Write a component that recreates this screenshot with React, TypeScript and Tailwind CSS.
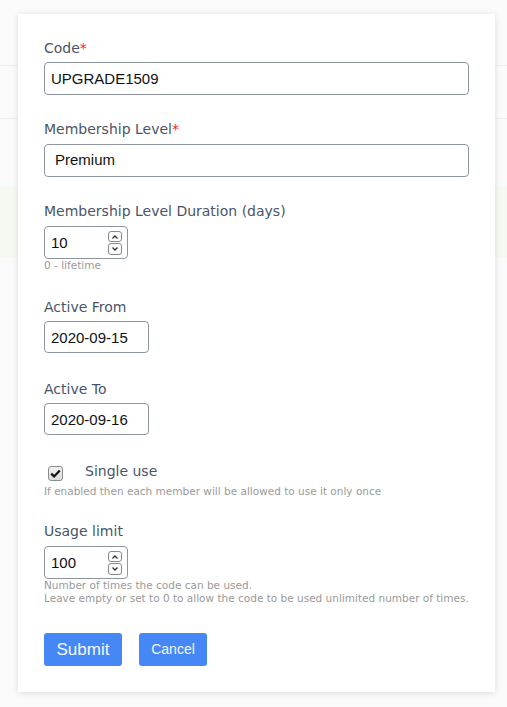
import React from "react";

const labelCls = "block text-[14px] leading-[20px] text-[#4a5568]";
const inputCls =
  "block w-full rounded-[4px] border border-[#8f95a0] bg-white px-[6px] text-[15px] text-[#111] outline-none";
const helpCls = "text-[10.5px] leading-[12px] text-[#9a9a9a]";

function Label({ children, required }: { children: React.ReactNode; required?: boolean }) {
  return (
    <label className={labelCls} style={{ fontFamily: "'DejaVu Sans', sans-serif" }}>
      {children}
      {required && <span className="text-[#ff1a1a]">*</span>}
    </label>
  );
}

function Chevron({ up }: { up?: boolean }) {
  return (
    <svg width="8" height="6" viewBox="0 0 8 6" className="block">
      <path
        d={up ? "M1.5 4.5 L4 2 L6.5 4.5" : "M1.5 1.5 L4 4 L6.5 1.5"}
        fill="none"
        stroke="#333"
        strokeWidth="1.3"
      />
    </svg>
  );
}

function NumberField({ value }: { value: string }) {
  return (
    <div className="relative w-[84px]">
      <input readOnly value={value} className={`${inputCls} h-[33px]`} style={{ fontFamily: "'Liberation Sans', Arial, sans-serif" }} />
      <div className="absolute right-[6px] top-[5px] flex flex-col gap-[1px]">
        <span className="flex h-[11px] w-[14px] items-center justify-center rounded-[3px] border border-[#8a8a8a] bg-[#fbfbfb]">
          <Chevron up />
        </span>
        <span className="flex h-[12px] w-[14px] items-center justify-center rounded-[3px] border border-[#8a8a8a] bg-[#fbfbfb]">
          <Chevron />
        </span>
      </div>
    </div>
  );
}

export default function App() {
  const sans = { fontFamily: "'Liberation Sans', Arial, sans-serif" };
  const deja = { fontFamily: "'DejaVu Sans', sans-serif" };

  return (
    <div className="relative h-[707px] w-full overflow-hidden bg-[#fafafa]">
      {/* page behind the dialog */}
      <div className="h-[65px]" />
      <div className="h-[1px] bg-[#efefef]" />
      <div className="h-[52px]" />
      <div className="h-[1px] bg-[#efefef]" />
      <div className="h-[68px]" />
      <div className="h-[70px] bg-[#f4faf1]" />

      {/* dialog */}
      <div className="absolute left-[18px] top-[14px] w-[477px] bg-white px-[26px] pb-[26px] pt-[24px] shadow-[0_1px_6px_rgba(0,0,0,0.12)]">
        <Label required>Code</Label>
        <input readOnly value="UPGRADE1509" className={`${inputCls} mt-[4px] h-[33px]`} style={sans} />

        <div className="mt-[24px]">
          <Label required>Membership Level</Label>
          <div className={`${inputCls} mt-[5px] flex h-[33px] items-center px-[10px]`} style={sans}>
            Premium
          </div>
        </div>

        <div className="mt-[24px]">
          <Label>Membership Level Duration (days)</Label>
          <div className="mt-[5px]">
            <NumberField value="10" />
          </div>
          <p className={helpCls} style={deja}>0 - lifetime</p>
        </div>

        <div className="mt-[26px]">
          <Label>Active From</Label>
          <div className="mt-[4px] w-[105px]">
            <input readOnly value="2020-09-15" className={`${inputCls} h-[32px]`} style={sans} />
          </div>
        </div>

        <div className="mt-[26px]">
          <Label>Active To</Label>
          <div className="mt-[4px] w-[105px]">
            <input readOnly value="2020-09-16" className={`${inputCls} h-[32px]`} style={sans} />
          </div>
        </div>

        <div className="mt-[26px]">
          <div className="flex h-[20px] items-start">
            <span className="ml-[4px] mt-[5px] flex h-[15px] w-[15px] items-center justify-center rounded-[3px] border border-[#8d8d8d] bg-gradient-to-b from-[#f2f2f2] to-[#dcdcdc]">
              <svg width="11" height="9" viewBox="0 0 11 9">
                <path d="M1.2 4.6 L4.1 7.4 L9.8 1.4" fill="none" stroke="#111" strokeWidth="2.2" />
              </svg>
            </span>
            <span className="ml-[22px] text-[14px] leading-[20px] text-[#4a5568]" style={deja}>
              Single use
            </span>
          </div>
          <p className={`${helpCls} mt-[4px]`} style={deja}>
            If enabled then each member will be allowed to use it only once
          </p>
        </div>

        <div className="mt-[24px]">
          <Label>Usage limit</Label>
          <div className="mt-[5px]">
            <NumberField value="100" />
          </div>
          <p className="text-[10.5px] leading-[13px] text-[#9a9a9a]" style={deja}>
            Number of times the code can be used.
            <br />
            Leave empty or set to 0 to allow the code to be used unlimited number of times.
          </p>
        </div>

        <div className="mt-[28px] flex gap-[17px]">
          <button className="h-[33px] w-[78px] rounded-[3px] bg-[#4587f4] text-[17px] text-[#f4f7ff]" style={sans}>
            Submit
          </button>
          <button className="h-[33px] w-[68px] rounded-[3px] bg-[#4587f4] text-[14px] text-[#f4f7ff]" style={sans}>
            Cancel
          </button>
        </div>
      </div>
    </div>
  );
}
